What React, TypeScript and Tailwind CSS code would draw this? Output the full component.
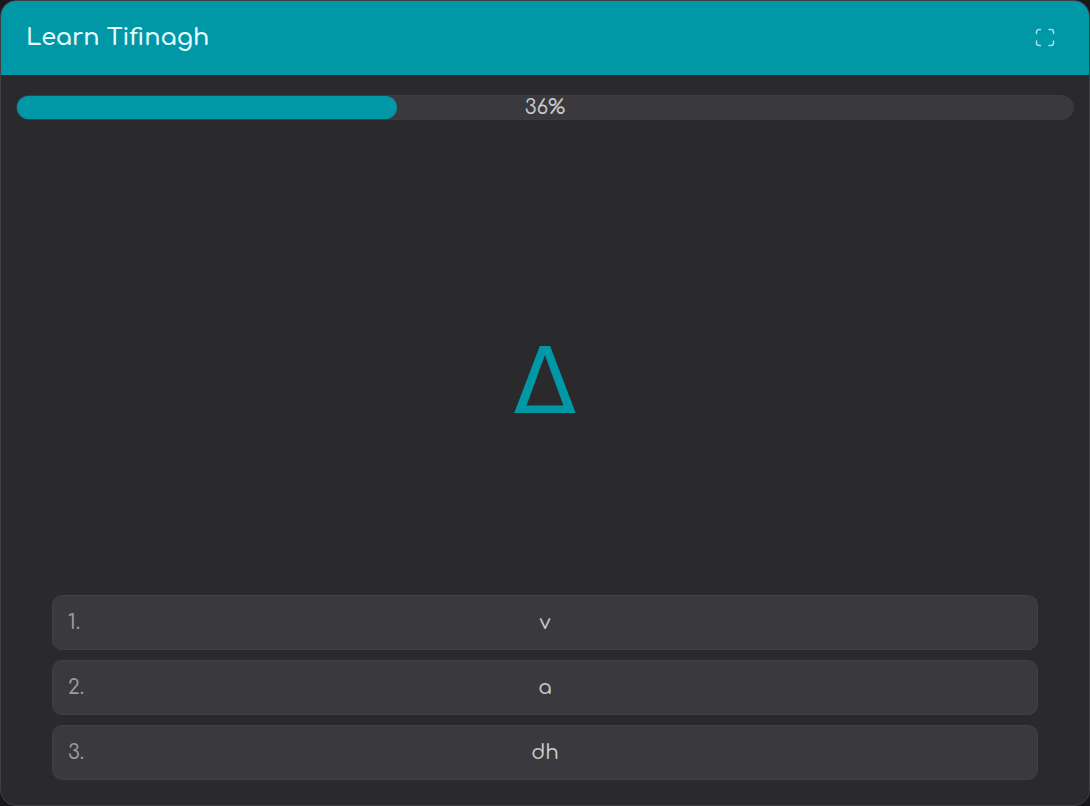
import { useState } from "react";

const choices = ["v", "a", "dh"];

export default function App() {
  const [picked, setPicked] = useState<number | null>(null);
  const progress = 36;

  const toggleFullscreen = () => {
    if (document.fullscreenElement) {
      document.exitFullscreen();
    } else {
      document.documentElement.requestFullscreen();
    }
  };

  return (
    <div className="min-h-screen flex bg-[#18181b] antialiased font-['Comfortaa','Quicksand','Lato',sans-serif]">
      <div className="flex-1 flex flex-col rounded-2xl overflow-hidden border border-[#3f3f44] bg-[#2a2a2c]">
        <header className="h-[74px] flex items-center justify-between pl-[25px] pr-[34px] bg-[#0097a7]">
          <h1 className="text-[24px] leading-8 font-semibold text-[#e8fdff]">Learn Tifinagh</h1>
          <button aria-label="Fullscreen" onClick={toggleFullscreen} className="text-[#a9dde2]">
            <svg
              width="20"
              height="20"
              viewBox="0 0 20 20"
              fill="none"
              stroke="currentColor"
              strokeWidth="1.5"
              strokeLinecap="round"
            >
              <path d="M1.5 5.5V4A2.5 2.5 0 0 1 4 1.5h1.5M14 1.5h2A2.5 2.5 0 0 1 18.5 4v1.5M18.5 13v2a2.5 2.5 0 0 1-2.5 2.5h-2M5.5 17.5H4A2.5 2.5 0 0 1 1.5 15v-2" />
            </svg>
          </button>
        </header>

        <main className="flex-1 flex flex-col">
          <div
            role="progressbar"
            aria-label="Lesson progress"
            aria-valuenow={progress}
            aria-valuemin={0}
            aria-valuemax={100}
            className="relative mt-5 mx-[15px] h-[25px] rounded-full border border-[#3d3d41] bg-[#3a3a3e]"
          >
            <div className="h-full rounded-full bg-[#0097a7]" style={{ width: `${progress}%` }} />
            <span className="absolute inset-0 flex items-center justify-center text-[20px] leading-6 font-medium text-[#c8c8cb]">
              {progress}%
            </span>
          </div>

          <div className="flex-1 flex items-center justify-center pt-12">
            <p className="text-[92px] leading-none text-[#0097a7] font-['DejaVu_Sans',sans-serif]">ⵠ</p>
          </div>

          {/* Answers */}
          <div className="flex flex-col gap-[10px] px-[51px] pb-[25px]">
            {choices.map((choice, index) => (
              <button
                key={choice}
                onClick={() => setPicked(index)}
                aria-pressed={picked === index}
                className="relative h-[55px] rounded-[10px] border border-[#414145] bg-[#3a3a3e] text-[20px] leading-6 font-medium text-[#c8c8cb]"
              >
                <span className="absolute left-[15px] text-[#9c9ca1]">{index + 1}.</span>
                {choice}
              </button>
            ))}
          </div>
        </main>
      </div>
    </div>
  );
}
